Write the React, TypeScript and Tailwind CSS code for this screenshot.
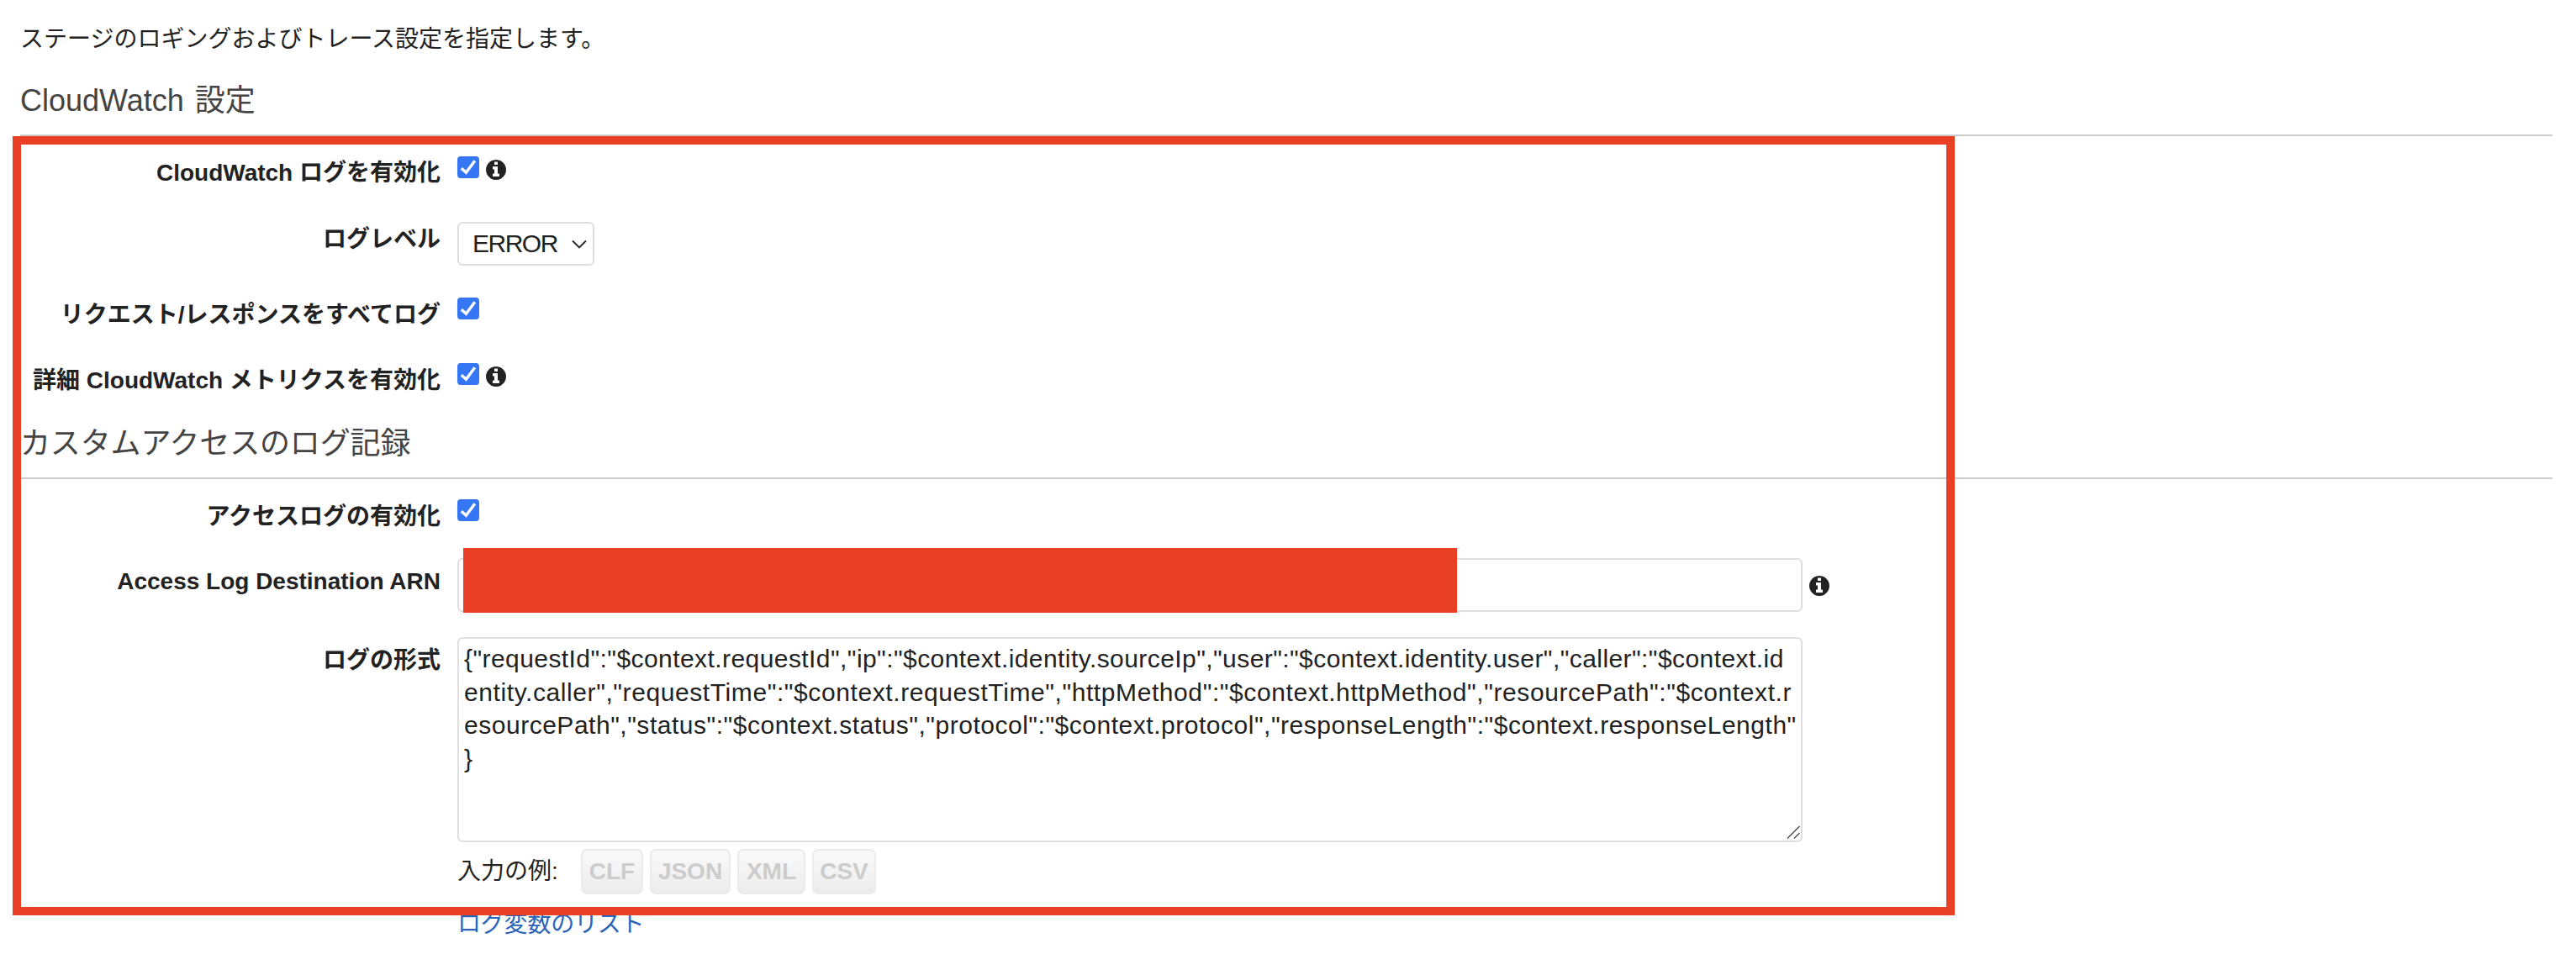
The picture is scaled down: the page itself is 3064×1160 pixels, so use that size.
import type { ReactNode } from "react";

const LOG_LINES = [
  { text: '{"requestId":"$context.requestId","ip":"$context.identity.sourceIp","user":"$context.identity.user","caller":"$context.id', tracking: "tracking-[0.43px]" },
  { text: 'entity.caller","requestTime":"$context.requestTime","httpMethod":"$context.httpMethod","resourcePath":"$context.r', tracking: "tracking-[0.59px]" },
  { text: 'esourcePath","status":"$context.status","protocol":"$context.protocol","responseLength":"$context.responseLength"', tracking: "tracking-[0.52px]" },
  { text: "}", tracking: "tracking-normal" },
];

function Check() {
  return (
    <span className="flex h-[26px] w-[26px] shrink-0 items-center justify-center rounded-[4px] bg-[#3576f6]">
      <svg viewBox="0 0 26 26" className="h-[26px] w-[26px]" fill="none">
        <path d="M4.8 14.3 L10.4 19.3 L20.8 5.2" stroke="#fff" strokeWidth="3.4" />
      </svg>
    </span>
  );
}

function Info({ className }: { className: string }) {
  return (
    <svg viewBox="128 128 1536 1536" className={`h-6 w-6 shrink-0 ${className}`} fill="#222">
      <path d="M1152 1376v-160q0-14-9-23t-23-9h-96v-512q0-14-9-23t-23-9h-320q-14 0-23 9t-9 23v160q0 14 9 23t23 9h96v320h-96q-14 0-23 9t-9 23v160q0 14 9 23t23 9h448q14 0 23-9t9-23zM1024 480v-160q0-14-9-23t-23-9h-192q-14 0-23 9t-9 23v160q0 14 9 23t23 9h192q14 0 23-9t9-23zM1664 896q0 209-103 385.500t-279.500 279.500-385.500 103-385.500-103-279.500-279.500-103-385.500 103-385.500 279.500-279.500 385.500-103 385.500 103 279.500 279.500 103 385.500z" />
    </svg>
  );
}

function Row({ label, labelClass, className, children }: { label: string; labelClass: string; className: string; children: ReactNode }) {
  return (
    <div className={`flex items-start ${className}`}>
      <div className={`w-[500px] shrink-0 whitespace-nowrap text-right text-[28px] leading-[40px] font-bold ${labelClass}`}>{label}</div>
      <div className="ml-5 flex items-start">{children}</div>
    </div>
  );
}

function ExampleButton({ label, className }: { label: string; className: string }) {
  return (
    <button className={`h-[54px] rounded-[7px] border-2 border-[#ebebeb] bg-linear-to-b from-[#fafafa] to-[#ececec] text-[28px] leading-[50px] font-bold text-[#ccc] ${className}`}>
      {label}
    </button>
  );
}

export default function App() {
  return (
    <div className="relative h-[1160px] w-[3064px] overflow-hidden bg-white pl-6 pr-7 font-['Liberation_Sans','Noto_Sans_CJK_JP',sans-serif] text-[#222]">
      <p className="pt-[27px] text-[28px] leading-[40px]">ステージのロギングおよびトレース設定を指定します。</p>
      <h2 className="mt-[29px] h-[66px] border-b-2 border-[#ccc] text-[36px] leading-[48px] text-[#444] [word-spacing:3px]">CloudWatch 設定</h2>

      <Row label="CloudWatch ログを有効化" labelClass="mt-[24px]" className="h-[102px]">
        <span className="mt-6"><Check /></span>
        <Info className="ml-2 mt-[28px]" />
      </Row>
      <Row label="ログレベル" labelClass="mt-[1px]" className="h-[80px]">
        <div className="flex h-[52px] w-[163px] items-center justify-between rounded-[6px] border-2 border-[#dedede] pl-4 pr-[7px] text-[30px] leading-[48px]">
          <span className="tracking-[-1.5px]">ERROR</span>
          <svg viewBox="0 0 18 11" className="h-[11px] w-[18px]" fill="none">
            <path d="M1 1.5 L9 9.5 L17 1.5" stroke="#222" strokeWidth="1.8" />
          </svg>
        </div>
      </Row>
      <Row label="リクエスト/レスポンスをすべてログ" labelClass="mt-[11px]" className="h-[80px]">
        <span className="mt-[10px]"><Check /></span>
      </Row>
      <Row label="詳細 CloudWatch メトリクスを有効化" labelClass="mt-[9px]" className="h-[80px]">
        <span className="mt-2"><Check /></span>
        <Info className="ml-2 mt-3" />
      </Row>

      <h2 className="h-[66px] border-b-2 border-[#ccc] text-[36px] leading-[48px] tracking-[-0.15px] text-[#444]">カスタムアクセスのログ記録</h2>

      <Row label="アクセスログの有効化" labelClass="mt-[25px]" className="h-[94px]">
        <span className="mt-6"><Check /></span>
      </Row>
      <Row label="Access Log Destination ARN" labelClass="mt-[8px]" className="h-[94px]">
        <div className="relative h-16 w-[1600px] rounded-[6px] border-2 border-[#dedede]">
          <div className="absolute left-[5px] top-[-14px] h-[77px] w-[1182px] bg-[#e83f25]" />
        </div>
        <Info className="ml-2 mt-[21px]" />
      </Row>
      <Row label="ログの形式" labelClass="mt-[8px]" className="h-[244px]">
        <div className="relative h-[244px] w-[1600px] rounded-[6px] border-2 border-[#dedede] pl-[6px] pt-1">
          {LOG_LINES.map((line) => (
            <div key={line.text} className={`h-[39.5px] whitespace-pre text-[30px] leading-[40px] ${line.tracking}`}>{line.text}</div>
          ))}
          <svg viewBox="0 0 16 16" className="absolute bottom-[2px] right-[1px] h-4 w-4" fill="none">
            <path d="M1 15.5 L15.5 1 M9 15.5 L15.5 9" stroke="#444" strokeWidth="1.3" />
          </svg>
        </div>
      </Row>

      <div className="ml-[520px] mt-2 flex">
        <span className="mt-[7px] w-[147px] text-[28px] leading-[40px]">入力の例:</span>
        <div className="flex gap-2">
          <ExampleButton label="CLF" className="w-[74px]" />
          <ExampleButton label="JSON" className="w-[96px]" />
          <ExampleButton label="XML" className="w-[81px]" />
          <ExampleButton label="CSV" className="w-[76px]" />
        </div>
      </div>
      <a className="ml-[520px] mt-[16px] block text-[28px] leading-[40px] tracking-[-0.2px] text-[#2a64b8]">ログ変数のリスト</a>

      <div className="pointer-events-none absolute left-[15px] top-[162px] h-[927px] w-[2310px] border-[10px] border-[#e83f25]" />
    </div>
  );
}
